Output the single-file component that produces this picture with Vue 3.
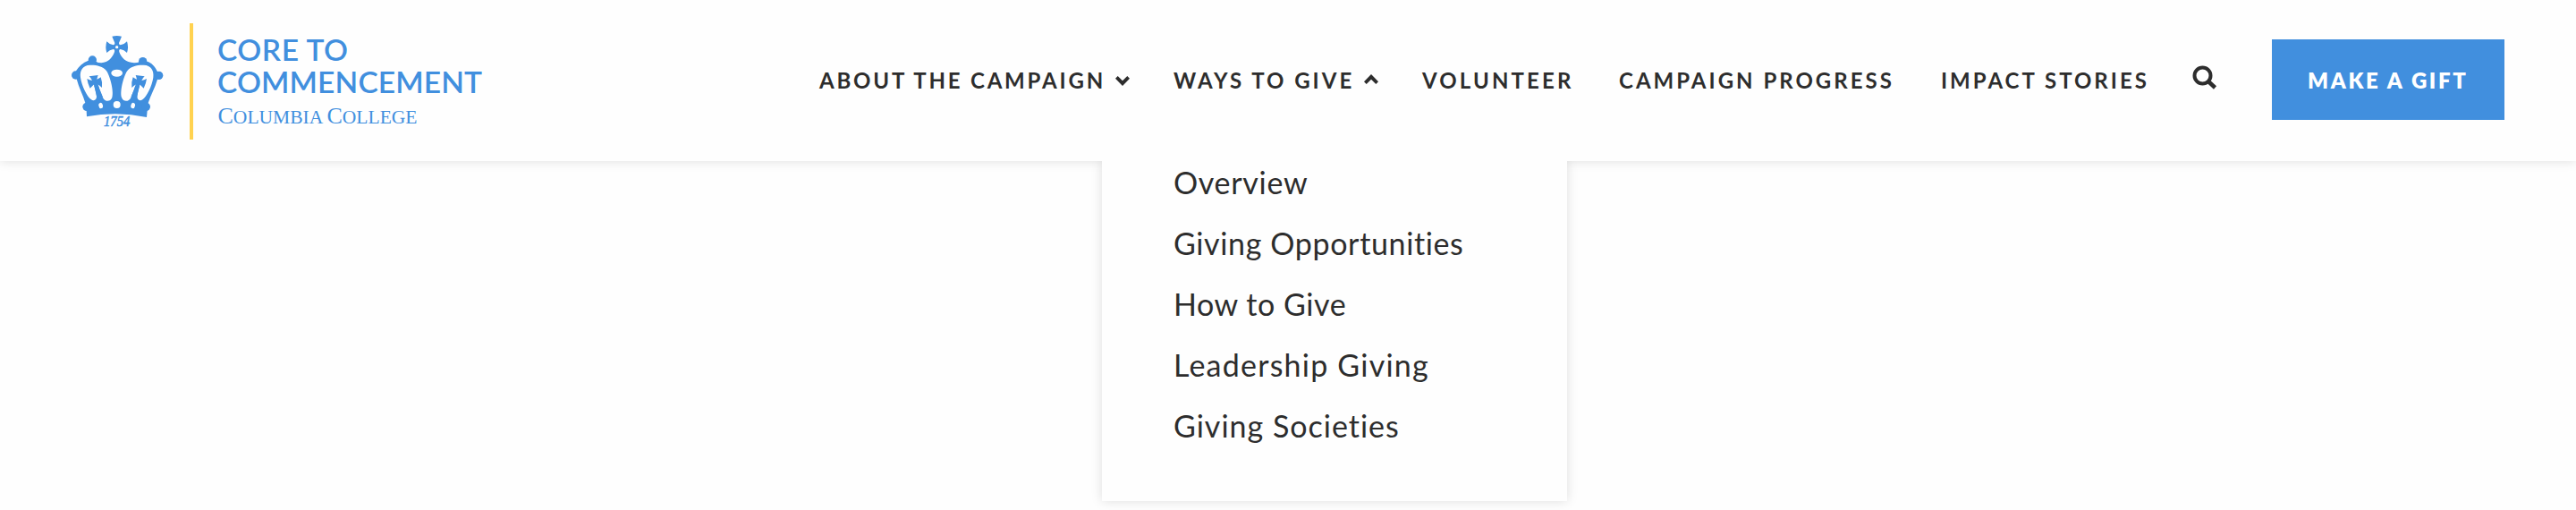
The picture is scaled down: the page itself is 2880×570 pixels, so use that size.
<script setup>
const items = [
  { label: 'ABOUT THE CAMPAIGN', cls: 'about', arrow: 'down' },
  { label: 'WAYS TO GIVE', cls: 'ways', arrow: 'up' },
  { label: 'VOLUNTEER', cls: 'volunteer' },
  { label: 'CAMPAIGN PROGRESS', cls: 'progress' },
  { label: 'IMPACT STORIES', cls: 'impact' },
]
const links = [
  { label: 'Overview', cls: 'overview' },
  { label: 'Giving Opportunities', cls: 'opportunities' },
  { label: 'How to Give', cls: 'how' },
  { label: 'Leadership Giving', cls: 'leadership' },
  { label: 'Giving Societies', cls: 'societies' },
]
</script>

<template>
  <div class="page">
  <header class="header">
    <a class="brand">
      <svg class="crown" viewBox="0 0 420 420" width="140" height="140">
        <g fill="#418fde">
          <path d="M196 62 Q212 58 228 62 Q224 72 219 84 Q218 90 224 91 Q236 90 246 79 Q252 98 246 117 Q236 106 224 105 Q218 106 220 114 C226 132 240 149 270 151 Q281 151 287 148 L313 146 C328 150 340 162 348 180 L348 206 C340 234 325 260 317 285 L314 311 L312 333 Q212 312 111 331 L110 311 L106 285 C99 260 84 234 77 205 L75 178 C84 162 98 150 116 143 L143 147 Q148 151 160 151 C184 149 198 132 204 114 Q206 106 200 105 Q188 106 178 117 Q172 98 178 79 Q188 90 200 91 Q206 90 205 84 Q200 72 196 62Z" />
          <circle cx="130" cy="141" r="14" />
          <circle cx="299" cy="146" r="14" />
          <circle cx="74" cy="192" r="14" />
          <circle cx="353" cy="193" r="14" />
          <circle cx="111" cy="298" r="14" />
          <circle cx="310" cy="298" r="14" />
        </g>
        <circle cx="212" cy="98" r="5" fill="#fefefe" />
        <ellipse cx="212" cy="185" rx="19" ry="12" fill="#fefefe" />
        <circle cx="212" cy="291" r="12" fill="#fefefe" />
        <g id="crown-window">
          <path fill="#fefefe" d="M122 158 C97 159 87 176 90 200 C94 228 112 264 126 274 C136 281 145 274 144 262 L136 228 L150 228 L166 269 C172 281 190 283 196 267 C203 245 188 190 176 176 C165 162 142 157 122 158Z" />
          <path fill="#418fde" d="M134 222 L148 219 Q152 241 164 264 L145 277 Q145 255 134 222Z" />
          <path fill="#418fde" d="M119 196 L149 192 Q146 200 145 206 Q153 203 158 199 Q164 215 162 234 Q154 226 147 223 L134 224 Q128 230 122 236 Q114 220 112 204 Q120 208 129 210 Q126 202 119 196Z" />
          <ellipse cx="158" cy="294" rx="7" ry="9.500" transform="rotate(-12 158 294)" fill="#fefefe" />
        </g>
        <use href="#crown-window" transform="translate(424 0) scale(-1 1)" />
        <text x="168" y="363" textLength="88" lengthAdjust="spacingAndGlyphs" class="year">1754</text>
      </svg>
      <span class="rule"></span>
      <svg class="wordmark" width="320" height="130" viewBox="240 26 320 130">
        <text x="243" y="68.300" textLength="146" class="title">CORE TO</text>
        <text x="243" y="104.300" textLength="296" class="title">COMMENCEMENT</text>
        <text x="243.500" y="138" textLength="223" class="college"><tspan class="big">C</tspan>OLUMBIA <tspan class="big">C</tspan>OLLEGE</text>
      </svg>
    </a>
    <nav class="nav">
      <a v-for="i in items" :key="i.label" class="item" :class="i.cls">
        <span>{{ i.label }}</span>
        <svg v-if="i.arrow" class="arrow" :class="i.arrow" width="16" height="11" viewBox="0 0 16 11">
          <path fill="#2d2d2d" d="M2.700 0 L8 5.200 L13.300 0 L16 2.700 L8 11 L0 2.700Z" />
        </svg>
      </a>
    </nav>
    <svg class="search" width="28" height="28" viewBox="0 0 28 28" fill="none" stroke="#2d2d2d">
      <circle cx="11.500" cy="11.500" r="9" stroke-width="4" />
      <path d="M18 18 L25.500 25" stroke-width="4.600" />
    </svg>
    <a class="gift"><span>MAKE A GIFT</span></a>
    <div class="menu">
      <a v-for="l in links" :key="l.label" :class="l.cls">{{ l.label }}</a>
    </div>
  </header>
  </div>
</template>

<style>
body { background: #fefefe; }
</style>

<style scoped>
.page { height: 570px; overflow: hidden; background: #fefefe; }
.header {
  position: relative;
  box-sizing: border-box;
  display: flex;
  align-items: flex-start;
  height: 180px;
  padding-left: 60px;
  background: #fefefe;
  box-shadow: 0 0 12px rgba(0, 0, 0, 0.13);
  font-family: Lato, "Liberation Sans", sans-serif;
  color: #2d2d2d;
}
.brand { display: flex; width: 856px; }
.crown { margin-top: 20px; flex: none; }
.rule { width: 4px; height: 130px; margin: 26px 24px 0 12px; background: #ffd250; flex: none; }
.wordmark { margin-top: 26px; flex: none; }
.title { font-size: 33.500px; font-weight: 600; fill: #418fde; }
.college { font-family: "Liberation Serif", serif; font-size: 21.500px; fill: #418fde; }
.big { font-size: 26px; }
.year { font-family: "Liberation Serif", serif; font-style: italic; font-size: 50px; fill: #418fde; stroke: #418fde; stroke-width: 1.500px; }
.nav { display: flex; padding-top: 74px; }
.item { display: flex; white-space: nowrap; font-size: 24px; line-height: 31px; font-weight: 700; letter-spacing: 3px; }
.about { width: 396px; letter-spacing: 2.800px; }
.ways { width: 278px; }
.volunteer { width: 220px; letter-spacing: 3.150px; }
.progress { width: 360px; }
.impact { width: 281px; }
.arrow { margin: 10.500px 0 0 11px; }
.up { transform: scaleY(-1); margin-top: 9px; }
.search { margin-top: 73px; flex: none; }
.gift {
  display: flex;
  align-items: center;
  box-sizing: border-box;
  width: 260px;
  height: 90px;
  margin: 44px 0 0 61px;
  padding-left: 40px;
  background: #418fde;
  color: #fff;
  font-size: 24px;
  font-weight: 800;
  letter-spacing: 2.650px;
  white-space: nowrap;
}
.menu {
  position: absolute;
  top: 180px;
  left: 1232px;
  box-sizing: border-box;
  display: flex;
  flex-direction: column;
  width: 520px;
  height: 380px;
  padding: 0 0 0 80px;
  background: #fefefe;
  box-shadow: 0 0 12px rgba(0, 0, 0, 0.13);
  clip-path: inset(0 -20px -20px -20px);
  font-size: 34px;
  line-height: 48px;
}
.menu a { margin-bottom: 20px; }
.overview { letter-spacing: 0.700px; }
.opportunities { letter-spacing: 0.630px; }
.how { letter-spacing: 0.550px; }
.leadership { letter-spacing: 1.220px; }
.societies { letter-spacing: 1px; }
</style>
